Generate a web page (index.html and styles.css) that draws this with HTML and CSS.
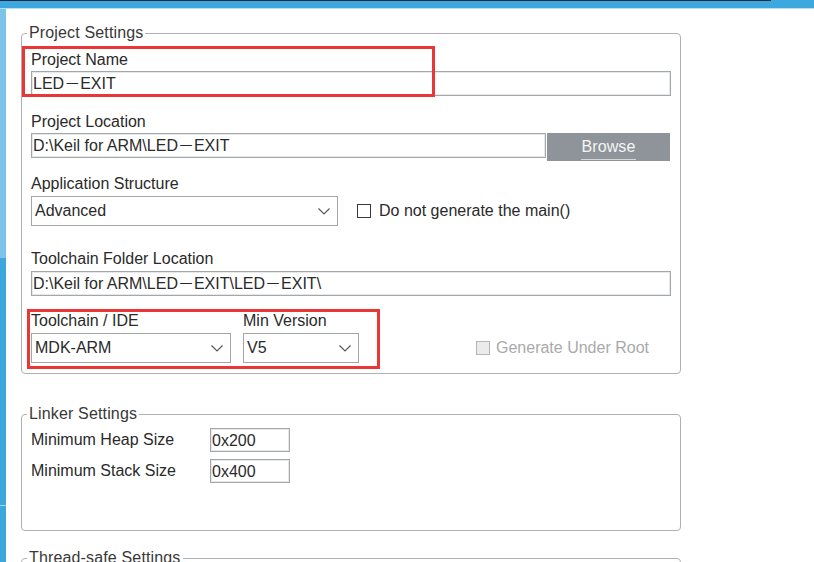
FILE: index.html
```html
<!DOCTYPE html>
<html lang="en">
<head>
<meta charset="utf-8">
<title>Project Settings</title>
<link rel="stylesheet" href="styles.css">
</head>
<body>
<div class="topbar"></div>
<div class="main">
  <div class="strip"></div>
  <div class="content">
    <fieldset class="group project">
      <legend>Project Settings</legend>
      <div class="label">Project Name</div>
      <div class="input full">LED－EXIT</div>

      <div class="label gap17">Project Location</div>
      <div class="row top">
        <div class="input loc">D:\Keil for ARM\LED－EXIT</div>
        <div class="browse"><span>Browse</span></div>
      </div>

      <div class="label gap14 lsel">Application Structure</div>
      <div class="row center">
        <div class="select app"><span>Advanced</span>
          <svg class="chev" width="12" height="7" viewBox="0 0 12 7"><polyline points="0.5,0.5 6,6 11.5,0.5" fill="none" stroke="#5a5a5a" stroke-width="1.2"/></svg>
        </div>
        <div class="check main-check"><span class="box"></span><span>Do not generate the main()</span></div>
      </div>

      <div class="label gap23 lsel">Toolchain Folder Location</div>
      <div class="input full">D:\Keil for ARM\LED－EXIT\LED－EXIT\</div>

      <div class="row bottom tool">
        <div class="col">
          <div class="label lsel">Toolchain / IDE</div>
          <div class="select ide"><span>MDK-ARM</span>
            <svg class="chev" width="12" height="7" viewBox="0 0 12 7"><polyline points="0.5,0.5 6,6 11.5,0.5" fill="none" stroke="#5a5a5a" stroke-width="1.2"/></svg>
          </div>
        </div>
        <div class="col">
          <div class="label lsel">Min Version</div>
          <div class="select ver"><span>V5</span>
            <svg class="chev" width="12" height="7" viewBox="0 0 12 7"><polyline points="0.5,0.5 6,6 11.5,0.5" fill="none" stroke="#5a5a5a" stroke-width="1.2"/></svg>
          </div>
        </div>
        <div class="check disabled root-check"><span class="box"></span><span>Generate Under Root</span></div>
      </div>
    </fieldset>

    <fieldset class="group linker">
      <legend>Linker Settings</legend>
      <div class="row center lrow">
        <div class="lname">Minimum Heap Size</div>
        <div class="input small">0x200</div>
      </div>
      <div class="row center lrow second">
        <div class="lname">Minimum Stack Size</div>
        <div class="input small">0x400</div>
      </div>
    </fieldset>

    <fieldset class="group thread">
      <legend>Thread-safe Settings</legend>
    </fieldset>

    <div class="mark mark1"></div>
    <div class="mark mark2"></div>
  </div>
</div>
</body>
</html>
```

FILE: styles.css
```css
* { box-sizing: border-box; }
html, body { margin: 0; padding: 0; }
body {
  width: 814px;
  height: 562px;
  overflow: hidden;
  background: #ffffff;
  font-family: "Liberation Sans", "Noto Sans CJK SC", Arial, sans-serif;
  font-size: 16px;
  line-height: 18px;
  color: #2a2a2a;
}

.topbar {
  height: 9px;
  background: linear-gradient(to right, #1a2a44 0, #1a2a44 771px, #3ca8dd 771px) top left / 100% 1px no-repeat, #3ca8dd;
  border-bottom: 1px solid #b6dff3;
}

.main { display: flex; height: 553px; }

.strip {
  width: 6px;
  flex: none;
  background: linear-gradient(to bottom,
    #7cc4ea 0, #7cc4ea 249px,
    #3ba7dc 249px, #3ba7dc 496px,
    #a4d6f0 496px, #a4d6f0 497px,
    #3ba7dc 497px);
}

.content { position: relative; flex: 1; padding-left: 15px; }

fieldset.group {
  margin: 0;
  width: 660px;
  min-inline-size: 0;
  border: 1px solid #adb1b6;
  border-radius: 4px;
  padding: 9px;
}
.project { margin-top: 15px !important; padding-bottom: 10px !important; }
.linker { margin-top: 31px !important; padding: 5px 9px 47px !important; }
.thread { margin-top: 18px !important; height: 60px; }

legend {
  padding: 0 2px;
  margin-left: -4px;
  line-height: 18px;
  color: #383838;
  letter-spacing: 0.15px;
}

.label { line-height: 18px; margin-bottom: 2px; }
.label.lsel { margin-bottom: 3px; }
.gap17 { margin-top: 17px; }
.gap14 { margin-top: 14px; }
.gap23 { margin-top: 24px; }

.row { display: flex; }
.row.top { align-items: flex-start; }
.row.center { align-items: center; }
.row.bottom { align-items: flex-end; }

.input {
  height: 25px;
  border: 1px solid #a2a7ac;
  box-shadow: inset 0 0 0 1px #e6e8ea;
  padding: 2px 1px 0 1px;
  line-height: 20px;
  white-space: nowrap;
  overflow: hidden;
  background: #fff;
}
.input.full { width: 640px; }
.input.loc { width: 515px; }
.input.small { width: 80px; height: 24px; line-height: 19px; }

.browse {
  width: 123px;
  height: 28px;
  margin-left: 1px;
  background: #8e9499;
  color: #f4f4f4;
  display: flex;
  justify-content: center;
  align-items: flex-start;
  padding-top: 5px;
}
.browse span {
  display: block;
  line-height: 18px;
  padding: 0 1px 3px;
  border-bottom: 1px solid #d4d7da;
  letter-spacing: 0.1px;
}

.select {
  height: 30px;
  border: 1px solid #a2a7ac;
  display: flex;
  align-items: center;
  justify-content: space-between;
  padding: 0 7px 0 3px;
  background: #fff;
}
.select span { line-height: 18px; }
.chev { display: block; flex: none; }
.select.app { width: 307px; }
.select.ide { width: 200px; }
.select.ver { width: 116px; }

.check { display: flex; align-items: center; line-height: 18px; }
.check .box {
  width: 14px;
  height: 14px;
  border: 1px solid #3a3a3a;
  background: #fff;
  margin-right: 8px;
  flex: none;
}
.main-check { margin-left: 19px; }
.check.disabled { color: #aaaaaa; }
.check.disabled .box { border-color: #b5b5b5; background: #ebebeb; margin-right: 6px; }

.tool { margin-top: 16px; }
.col { display: flex; flex-direction: column; }
.col + .col { margin-left: 12px; }
.root-check { margin-left: 117px; margin-bottom: 6px; }

.lrow { height: 24px; }
.lrow.second { margin-top: 7px; }
.lname { width: 179px; line-height: 18px; }

.mark {
  position: absolute;
  border: 3px solid #eb3636;
  pointer-events: none;
}
.mark1 { left: 16px; top: 37px; width: 413px; height: 51px; }
.mark2 { left: 21px; top: 300px; width: 353px; height: 60px; }
```
